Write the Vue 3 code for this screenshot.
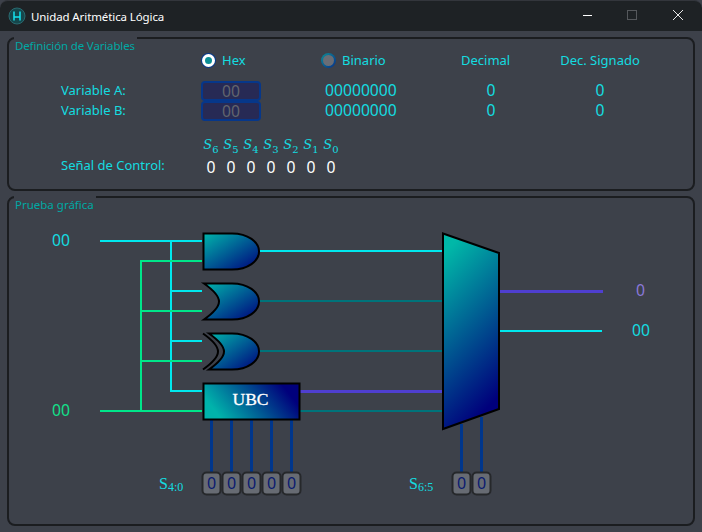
<template>
  <div class="window">
    <header class="titlebar">
      <svg class="app-icon" width="18" height="18" viewBox="0 0 18 18">
        <circle cx="9" cy="9" r="8" fill="#15474c" stroke="#2a6a70" />
        <path d="M6 4.500V13.500M6 10H12M12 4.500V13.500" fill="none" stroke="#14e4ee" stroke-width="1.5" />
      </svg>
      <span class="title">Unidad Aritmética Lógica</span>
      <div class="controls">
        <svg width="120" height="30" viewBox="0 0 120 30">
          <path d="M1 14.500h9" stroke="#fff" stroke-width="1" />
          <rect x="45.500" y="9.500" width="9" height="9" fill="none" stroke="#55585c" />
          <path d="M91 9l10 10M101 9l-10 10" stroke="#e8e8e8" stroke-width="1" />
        </svg>
      </div>
    </header>

    <main class="content">
      <section class="group group-vars">
        <div class="legend legend-vars">Definición de Variables</div>
        <div class="vars-grid">
          <span></span>
          <label class="radio-wrap head"><i class="radio on"></i>Hex</label>
          <label class="radio-wrap head"><i class="radio"></i>Binario</label>
          <span class="head head-dec">Decimal</span>
          <span class="head head-sig">Dec. Signado</span>

          <template v-for="row in rows" :key="row.name">
            <span class="var-label">{{ row.name }}</span>
            <div class="hex-input">00</div>
            <span class="val val-bin">00000000</span>
            <span class="val val-center">0</span>
            <span class="val val-center val-sig">0</span>
          </template>
        </div>
        <div class="control">
          <span class="control-label">Señal de Control:</span>
          <div class="bits">
            <div v-for="n in signals" :key="n" class="bit">
              <span class="bit-name"><em>S</em><sub>{{ n }}</sub></span>
              <span class="bit-val">0</span>
            </div>
          </div>
        </div>
      </section>

      <section class="group group-test">
        <div class="legend">Prueba gráfica</div>
        <svg class="diagram" width="688" height="329" viewBox="7 196 688 329">
          <defs>
            <linearGradient id="gate" x1="0" y1="0" x2="1" y2="1">
              <stop offset="0" stop-color="#00b5ab" />
              <stop offset="1" stop-color="#00007c" />
            </linearGradient>
            <linearGradient id="ubc" x1="0" y1="0.65" x2="1" y2="0.35">
              <stop offset="0.08" stop-color="#00b3ab" />
              <stop offset="0.92" stop-color="#00007c" />
            </linearGradient>
            <linearGradient id="mux" x1="0.35" y1="0" x2="0.65" y2="1">
              <stop offset="0" stop-color="#00b8a8" />
              <stop offset="0.94" stop-color="#00007c" />
            </linearGradient>
          </defs>

          <!-- entradas -->
          <g fill="none" stroke="#00e8ee" stroke-width="2">
            <path d="M100 241H202M171 241V391H202M171 291H202M171 341H202" />
            <path d="M260 251H442" />
            <path d="M500 331H602" />
          </g>
          <g fill="none" stroke="#00e68a" stroke-width="2">
            <path d="M100 411H202M141 411V261H202M141 311H202M141 361H202" />
          </g>
          <g fill="none" stroke="#00737a" stroke-width="2">
            <path d="M260 301H442M260 351H442M300 411H442" />
          </g>
          <g fill="none" stroke="#4f3fd0" stroke-width="3">
            <path d="M300 391.500H442M500 291.500H603" />
          </g>
          <g fill="none" stroke="#00368c" stroke-width="3">
            <path v-for="x in ubcLines" :key="x" :d="`M${x} 420V472`" />
            <path d="M461.500 424V472M481.500 417V472" />
          </g>

          <!-- compuertas -->
          <g stroke="#000" stroke-width="2" fill="url(#gate)">
            <path d="M203.500 233.500H232C248 233.500 259 242 259 251.500C259 261 248 269.500 232 269.500H203.500Z" />
            <path d="M204 283.500H232C248 283.500 259 292 259 301.500C259 311 248 319.500 232 319.500H204C216 311 219 306 219 301.500C219 297 216 292 204 283.500Z" />
            <path d="M209 333.500H232C248 333.500 259 342 259 351.500C259 361 248 369.500 232 369.500H209C221 361 224 356 224 351.500C224 347 221 342 209 333.500Z" />
            <path d="M203 333.500C215 342 218 347 218 351.500C218 356 215 361 203 369.500" fill="none" />
            <rect x="203.500" y="383.500" width="96" height="36" fill="url(#ubc)" />
            <path d="M443 233.500L499 253V409L443 429Z" fill="url(#mux)" />
          </g>
          <text class="ubc-text" x="250.500" y="405" text-anchor="middle">UBC</text>

          <!-- etiquetas -->
          <text class="wire-label cyan" x="52" y="246">00</text>
          <text class="wire-label green" x="52" y="416">00</text>
          <text class="wire-label purple" x="636" y="296">0</text>
          <text class="wire-label cyan" x="632" y="336">00</text>

          <text class="sel-label" x="159" y="489">S<tspan class="sel-sub" dy="2">4:0</tspan></text>
          <text class="sel-label" x="409" y="489">S<tspan class="sel-sub" dy="2">6:5</tspan></text>

          <g v-for="x in switches" :key="x">
            <rect :x="x + 0.5" y="472.500" width="18" height="22" rx="4" fill="#676b73" stroke="#26282b" stroke-width="2" />
            <text class="switch-text" :x="x + 9.500" y="489" text-anchor="middle">0</text>
          </g>
        </svg>
      </section>
    </main>
  </div>
</template>

<script setup>
const rows = [{ name: 'Variable A:' }, { name: 'Variable B:' }]
const signals = [6, 5, 4, 3, 2, 1, 0]
const ubcLines = [211.5, 231.5, 251.5, 271.5, 291.5]
const switches = [202, 222, 242, 262, 282, 452, 472]
</script>

<style>
html, body {
  margin: 0;
  background: #3d414a;
}
</style>

<style scoped>
.window {
  width: 702px;
  height: 532px;
  display: flex;
  flex-direction: column;
  background: #3d414a;
  font-family: "Noto Sans", sans-serif;
  overflow: hidden;
}

.titlebar {
  height: 31px;
  flex: none;
  display: flex;
  align-items: center;
  padding-left: 8px;
  background: #1e2225;
  border-top: 1px solid #33363c;
  border-radius: 8px 8px 0 0;
  box-sizing: border-box;
  color: #fff;
  font-size: 11.5px;
  letter-spacing: -0.1px;
}

.app-icon {
  margin-right: 5px;
}

.controls {
  margin-left: auto;
  display: flex;
  height: 30px;
}

.content {
  flex: 1;
  display: flex;
  flex-direction: column;
  gap: 5px;
  padding: 6px 7px;
}

.group {
  position: relative;
  box-sizing: border-box;
  border: 2px solid #1b1d20;
  border-radius: 8px;
  flex: none;
}

.group-vars {
  height: 154px;
  padding: 12px 0 0 52px;
}

.group-test {
  height: 330px;
}

.legend {
  position: absolute;
  left: 5px;
  top: -2px;
  padding: 1px 2px 0 1px;
  height: 15px;
  line-height: 15px;
  background: #3d414a;
  color: #00a8a4;
  font-size: 11.5px;
}

.legend-vars {
  letter-spacing: -0.15px;
}

.vars-grid {
  display: grid;
  grid-template-columns: 140px 120px 120px 100px 118px;
  grid-template-rows: 30px 20px 20px;
  color: #14dce0;
  align-items: center;
}

.head {
  font-size: 13px;
  align-self: start;
}

.radio-wrap {
  display: flex;
  align-items: center;
  gap: 6px;
}

.radio {
  width: 15px;
  height: 15px;
  box-sizing: border-box;
  border-radius: 50%;
  border: 2px solid transparent;
  background: linear-gradient(#6a6d75, #6a6d75) padding-box,
    linear-gradient(135deg, #0e8f96, #062f8c) border-box;
}

.radio.on {
  border: 3px solid #fff;
  background: #0b8f96;
  box-shadow: 0 0 0 1px #083a8c;
  width: 13px;
  height: 13px;
  margin: 1px;
}

.head-dec {
  padding-left: 20px;
}

.head-sig {
  text-align: center;
}

.var-label {
  font-size: 13px;
  margin-bottom: 2px;
}

.hex-input {
  width: 60px;
  height: 20px;
  box-sizing: border-box;
  border: 2px solid #06378a;
  border-radius: 4px;
  background: #272a55;
  color: #62656d;
  text-align: center;
  font-size: 15.7px;
  line-height: 16px;
}

.val {
  font-size: 15.7px;
  margin-bottom: 2px;
}

.val-bin {
  padding-left: 4px;
}

.val-center {
  text-align: center;
}

.control {
  display: flex;
  align-items: flex-start;
  margin-top: 14px;
  color: #14dce0;
}

.control-label {
  width: 140px;
  margin-top: 21px;
  font-size: 13px;
  line-height: 18px;
}

.bits {
  display: flex;
}

.bit {
  width: 20px;
  display: flex;
  flex-direction: column;
  align-items: center;
}

.bit-name {
  height: 20px;
  font-size: 13px;
  font-family: "DejaVu Serif", serif;
  line-height: 20px;
  white-space: nowrap;
}

.bit-name sub {
  font-size: 10px;
  line-height: 0;
}

.bit-val {
  margin-top: 3px;
  font-size: 15.7px;
  line-height: 18px;
  color: #fff;
}

.diagram {
  display: block;
  margin: -2px;
}

.ubc-text {
  font-family: "Liberation Serif", serif;
  font-size: 17.5px;
  fill: #fff;
  stroke: #fff;
  stroke-width: 0.3px;
}

.wire-label {
  font-size: 15.7px;
}

.cyan { fill: #14dce0; }
.green { fill: #12e08a; }
.purple { fill: #8a78d8; }

.sel-label {
  font-family: "Liberation Serif", serif;
  font-size: 16px;
  fill: #14dce0;
}

.sel-sub {
  font-size: 12px;
}

.switch-text {
  font-size: 16px;
  fill: #0a1a70;
}
</style>
